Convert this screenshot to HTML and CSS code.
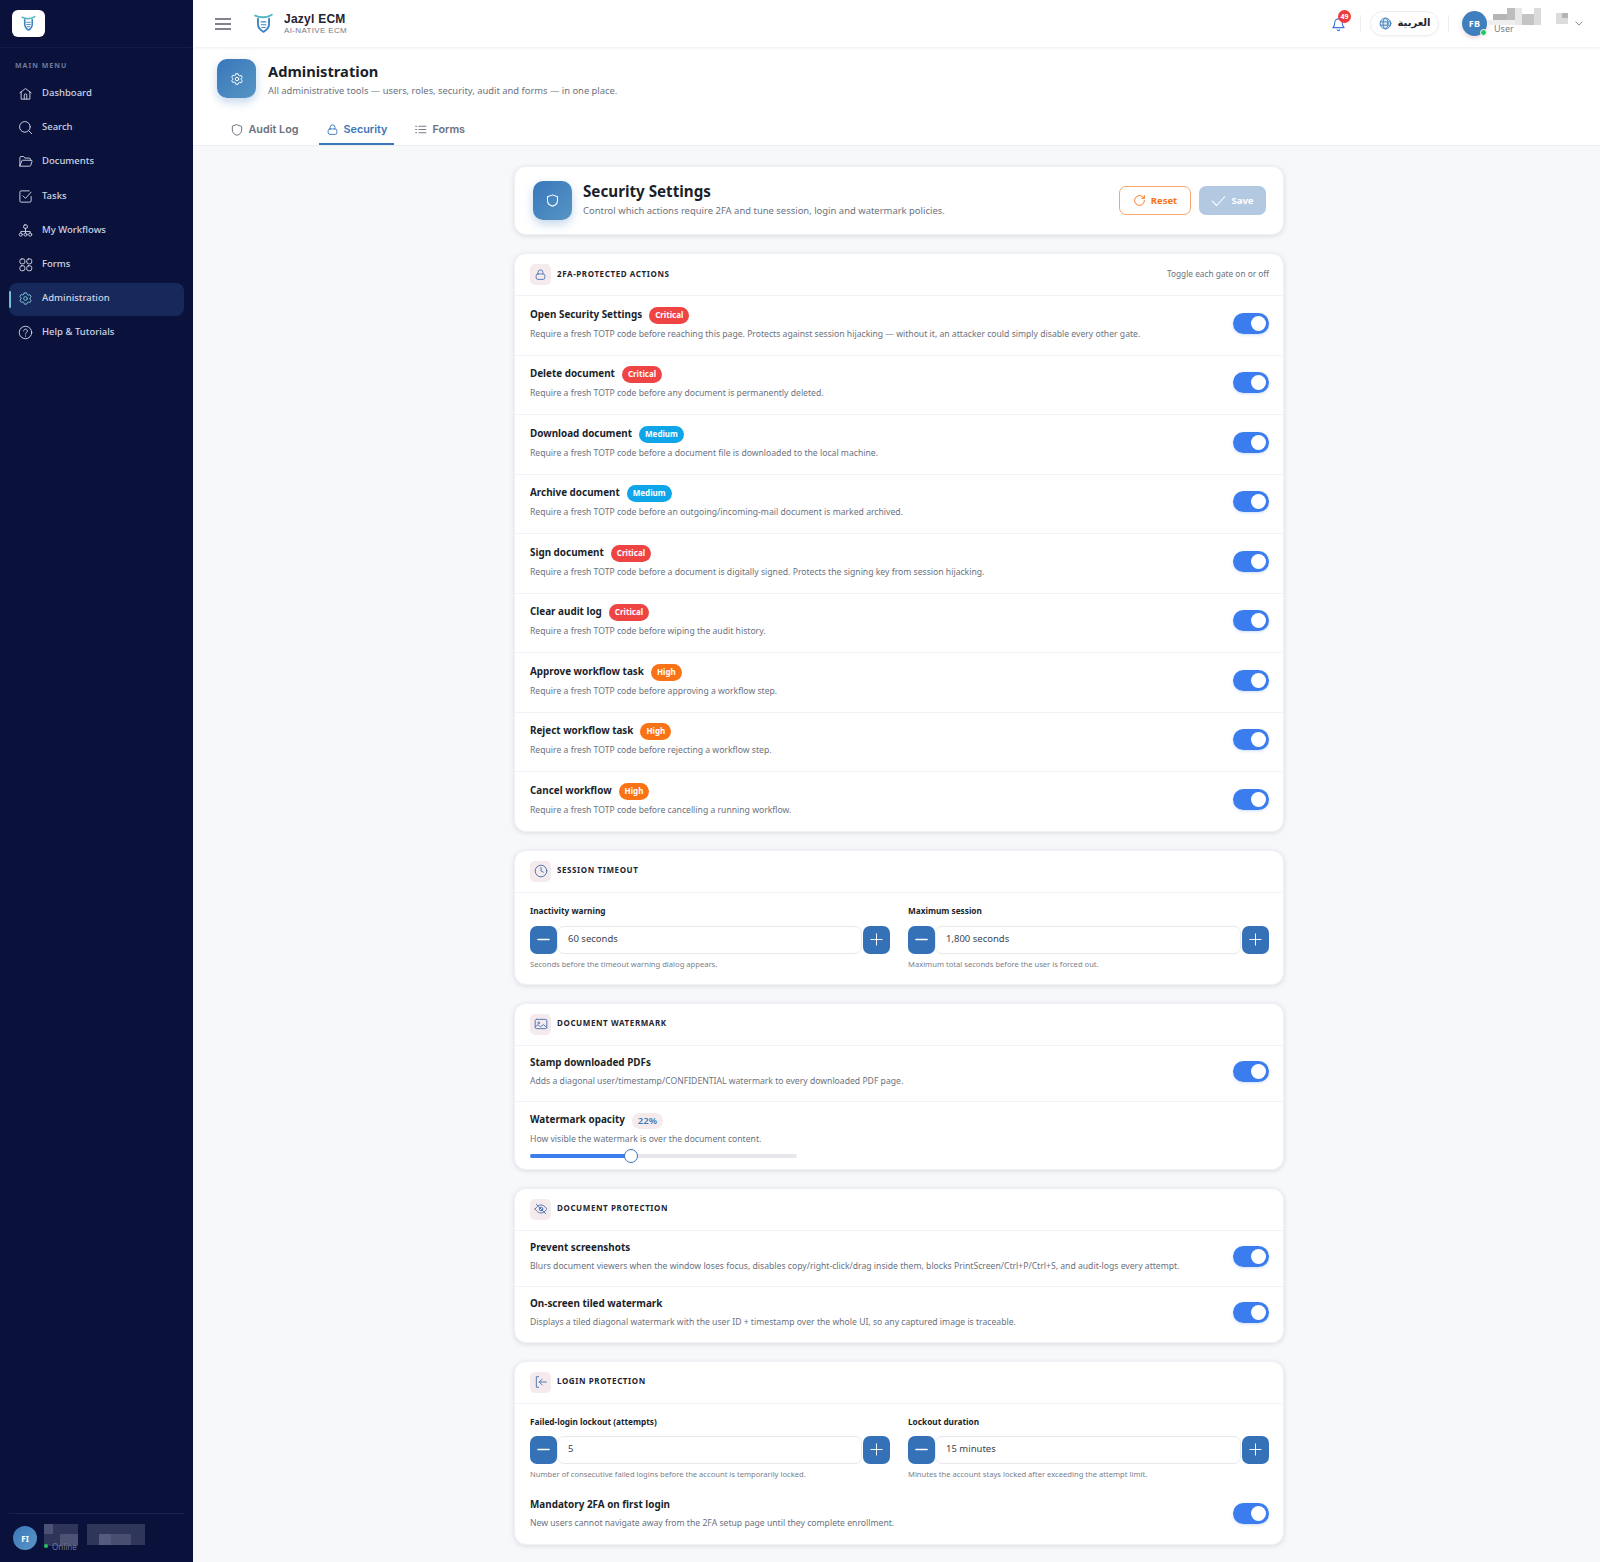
FILE: index.html
```html
<!DOCTYPE html>
<html lang="en">

<head>
  <meta charset="UTF-8">
  <meta name="viewport" content="width=device-width, initial-scale=1.0">
  <title>Security Settings</title>
  <link rel="stylesheet" href="styles.css">
</head>

<body>
  <svg class="defs" width="0" height="0">
    <symbol id="i-shield" viewBox="0 0 24 24"><path d="M12 3l8 3v6c0 4.600-3.300 7.800-8 9-4.700-1.200-8-4.400-8-9V6z"/></symbol>
    <symbol id="i-lock" viewBox="0 0 24 24"><rect x="4" y="11" width="16" height="10" rx="3"/><path d="M7.500 11V8a4.500 4.500 0 0 1 9 0v3"/></symbol>
    <symbol id="i-gear" viewBox="0 0 24 24"><circle cx="12" cy="12" r="3"/><path d="M10 3h4l.6 2.600 1.900 1.100 2.600-.8 2 3.400-2 1.800v2.200l2 1.800-2 3.400-2.600-.8-1.900 1.100L14 21h-4l-.6-2.600-1.900-1.100-2.600.8-2-3.400 2-1.800v-2.200l-2-1.800 2-3.400 2.600.8 1.900-1.100z"/></symbol>
    <symbol id="i-minus" viewBox="0 0 24 24"><path d="M3 12h18"/></symbol>
    <symbol id="i-plus" viewBox="0 0 24 24"><path d="M12 3v18M3 12h18"/></symbol>
  </svg>

  <div class="app">
    <aside class="sidebar">
      <div class="side-brand">
        <div class="brand-box">
          <svg viewBox="0 0 24 26" width="15" height="17" class="logo"><path d="M6 7v7c0 5 3 7.500 6 9.500 3-2 6-4.500 6-9.500V7" stroke="#3f86c4" stroke-width="2.600"/><path d="M9 11h6M9 14.500h6M10 18h4" stroke="#3f86c4" stroke-width="1.500"/><path d="M2 3c6 3 14 3 20-1" stroke="#55b6c6" stroke-width="2.600"/></svg>
        </div>
      </div>
      <div class="menu-label">MAIN MENU</div>
      <nav class="menu">
        <a class="menu-item"><svg viewBox="0 0 24 24"><path d="M3 11l9-7 9 7M5 9.500V21h14V9.500M10 21v-6.500a2 2 0 0 1 4 0V21"/></svg>Dashboard</a>
        <a class="menu-item"><svg viewBox="0 0 24 24"><circle cx="11" cy="11" r="8.500"/><path d="M17.500 17.500L22 22"/></svg>Search</a>
        <a class="menu-item"><svg viewBox="0 0 24 24"><path d="M3 19V6a2 2 0 0 1 2-2h4l2 2.500h7a2 2 0 0 1 2 2V10"/><path d="M3 19l3-8a1.500 1.500 0 0 1 1.400-1H21a1.500 1.500 0 0 1 1.400 2l-2 6a2 2 0 0 1-2 1.500H5a2 2 0 0 1-2-.5z"/></svg>Documents</a>
        <a class="menu-item"><svg viewBox="0 0 24 24"><path d="M21 12v7a2 2 0 0 1-2 2H5a2 2 0 0 1-2-2V5a2 2 0 0 1 2-2h13"/><path d="M8 11l4 4 9-10"/></svg>Tasks</a>
        <a class="menu-item"><svg viewBox="0 0 24 24"><rect x="9" y="3" width="6" height="5.500" rx="2"/><circle cx="4.500" cy="18.500" r="2.500"/><circle cx="12" cy="18.500" r="2.500"/><circle cx="19.500" cy="18.500" r="2.500"/><path d="M12 8.500V16M4.500 16v-2.500h15V16"/></svg>My Workflows</a>
        <a class="menu-item"><svg viewBox="0 0 24 24"><rect x="3" y="3" width="8" height="8" rx="3"/><rect x="14" y="3" width="8" height="8" rx="3"/><rect x="3" y="14" width="8" height="8" rx="3"/><rect x="14" y="14" width="8" height="8" rx="3"/></svg>Forms</a>
        <a class="menu-item active"><svg><use href="#i-gear"/></svg>Administration</a>
        <a class="menu-item"><svg viewBox="0 0 24 24"><circle cx="12" cy="12" r="10"/><path d="M9 9.500a3 3 0 1 1 4.500 2.600c-1 .6-1.500 1.200-1.500 2.400M12 17.500v.5"/></svg>Help &amp; Tutorials</a>
      </nav>
      <div class="side-user">
        <div class="side-avatar">FI</div>
        <div class="side-name">
          <svg class="pixels" width="101" height="22" viewBox="0 0 101 22"><rect width="34" height="22" fill="#363e62" opacity=".8"/><rect width="9" height="10" fill="#4c5274"/><rect x="16" y="10" width="18" height="11" fill="#4c5274"/><rect x="43" width="58" height="21" fill="#2e365a"/><rect x="55" y="10" width="12" height="11" fill="#555b7c"/><rect x="67" y="10" width="20" height="11" fill="#474e70"/></svg>
          <span class="online"><i></i>Online</span>
        </div>
      </div>
    </aside>

    <div class="main">
      <header class="topbar">
        <svg class="burger" viewBox="0 0 16 12" width="16" height="12"><path d="M0 1h16M0 6h16M0 11h16"/></svg>
        <svg viewBox="0 0 24 26" width="19" height="21" class="top-logo"><path d="M5 7v7c0 5 3.500 7.500 7 9.500 3.500-2 7-4.500 7-9.500V7" stroke="#3f86c4" stroke-width="2.400"/><path d="M9 11h6M9 14.500h6M10 18h4" stroke="#3f86c4" stroke-width="1.400"/><path d="M1.500 3c6 3 15 3 21-1" stroke="#55b6c6" stroke-width="2.400"/></svg>
        <div class="top-brand">
          <div class="top-name">Jazyl ECM</div>
          <div class="top-tag">AI-NATIVE ECM</div>
        </div>
        <div class="top-right">
          <div class="bell">
            <svg viewBox="0 0 24 24" width="15" height="15"><path d="M6 9a6 6 0 0 1 12 0c0 5 2 7 3 8H3c1-1 3-3 3-8zM10 20.500a2.200 2.200 0 0 0 4 0"/></svg>
            <span class="bell-badge">49</span>
          </div>
          <span class="top-sep"></span>
          <div class="lang">
            <svg viewBox="0 0 24 24" width="13" height="13"><circle cx="12" cy="12" r="10" fill="#dbe8f5"/><ellipse cx="12" cy="12" rx="4.500" ry="10"/><path d="M2.500 9h19M2.500 15h19"/></svg>
            <span>العربية</span>
          </div>
          <span class="top-sep"></span>
          <div class="avatar">FB<i></i></div>
          <div class="top-user">
            <svg class="pixels" width="54" height="17" viewBox="0 0 54 17"><rect x="6" y="6" width="14" height="6" fill="#b5b5b5"/><rect x="20" width="8" height="12" fill="#bdbdbd"/><rect x="28" width="7" height="17" fill="#e8e8e8"/><rect x="35" y="6" width="12" height="11" fill="#c4c4c4"/><rect x="47" width="7" height="17" fill="#dcdcdc"/><rect y="12" width="28" height="5" fill="#efefef"/></svg>
            <span>User</span>
          </div>
          <svg class="pixels top-px" width="12" height="11" viewBox="0 0 12 11"><rect width="12" height="11" fill="#dcdcdc"/><rect x="6" width="6" height="5" fill="#b5b5b5"/></svg>
          <svg class="chev" viewBox="0 0 10 6" width="8" height="5"><path d="M1 1l4 4 4-4"/></svg>
        </div>
      </header>

      <div class="page-head">
        <div class="head-row">
          <div class="grad-icon"><svg width="14" height="14"><use href="#i-gear"/></svg></div>
          <div>
            <h1>Administration</h1>
            <p>All administrative tools — users, roles, security, audit and forms — in one place.</p>
          </div>
        </div>
        <div class="tabs">
          <a class="tab"><svg width="14" height="14"><use href="#i-shield"/></svg>Audit Log</a>
          <a class="tab on"><svg width="13" height="13"><use href="#i-lock"/></svg>Security</a>
          <a class="tab"><svg viewBox="0 0 24 24" width="13" height="13"><path d="M9 6h13M9 12h13M9 18h13M3 6h2M3 12h2M3 18h2"/></svg>Forms</a>
        </div>
      </div>

      <main class="content">
        <div class="stack">
          <section class="card title-card">
            <div class="grad-icon"><svg width="15" height="15"><use href="#i-shield"/></svg></div>
            <div class="title-text">
              <h2>Security Settings</h2>
              <p>Control which actions require 2FA and tune session, login and watermark policies.</p>
            </div>
            <button class="btn reset"><svg viewBox="0 0 24 24" width="13" height="13"><path d="M21 12a9 9 0 1 1-9-9c2.500 0 4.900 1 6.700 2.700L21 8"/><path d="M21 3v5h-5"/></svg>Reset</button>
            <button class="btn save"><svg viewBox="0 0 24 24" width="15" height="15"><path d="M2 13l7 7L22 6"/></svg>Save</button>
          </section>

          <section class="card">
            <div class="card-head">
              <span class="head-icon"><svg width="13" height="13"><use href="#i-lock"/></svg></span>
              <h3>2FA-PROTECTED ACTIONS</h3>
              <span class="head-note">Toggle each gate on or off</span>
            </div>
            <div class="row">
              <div class="row-text">
                <div class="row-title">Open Security Settings <span class="badge red">Critical</span></div>
                <div class="row-desc">Require a fresh TOTP code before reaching this page. Protects against session hijacking — without it, an attacker could simply disable every other gate.</div>
              </div>
              <span class="toggle"></span>
            </div>
            <div class="row">
              <div class="row-text">
                <div class="row-title">Delete document <span class="badge red">Critical</span></div>
                <div class="row-desc">Require a fresh TOTP code before any document is permanently deleted.</div>
              </div>
              <span class="toggle"></span>
            </div>
            <div class="row">
              <div class="row-text">
                <div class="row-title">Download document <span class="badge blue">Medium</span></div>
                <div class="row-desc">Require a fresh TOTP code before a document file is downloaded to the local machine.</div>
              </div>
              <span class="toggle"></span>
            </div>
            <div class="row">
              <div class="row-text">
                <div class="row-title">Archive document <span class="badge blue">Medium</span></div>
                <div class="row-desc">Require a fresh TOTP code before an outgoing/incoming-mail document is marked archived.</div>
              </div>
              <span class="toggle"></span>
            </div>
            <div class="row">
              <div class="row-text">
                <div class="row-title">Sign document <span class="badge red">Critical</span></div>
                <div class="row-desc">Require a fresh TOTP code before a document is digitally signed. Protects the signing key from session hijacking.</div>
              </div>
              <span class="toggle"></span>
            </div>
            <div class="row">
              <div class="row-text">
                <div class="row-title">Clear audit log <span class="badge red">Critical</span></div>
                <div class="row-desc">Require a fresh TOTP code before wiping the audit history.</div>
              </div>
              <span class="toggle"></span>
            </div>
            <div class="row">
              <div class="row-text">
                <div class="row-title">Approve workflow task <span class="badge orange">High</span></div>
                <div class="row-desc">Require a fresh TOTP code before approving a workflow step.</div>
              </div>
              <span class="toggle"></span>
            </div>
            <div class="row">
              <div class="row-text">
                <div class="row-title">Reject workflow task <span class="badge orange">High</span></div>
                <div class="row-desc">Require a fresh TOTP code before rejecting a workflow step.</div>
              </div>
              <span class="toggle"></span>
            </div>
            <div class="row">
              <div class="row-text">
                <div class="row-title">Cancel workflow <span class="badge orange">High</span></div>
                <div class="row-desc">Require a fresh TOTP code before cancelling a running workflow.</div>
              </div>
              <span class="toggle"></span>
            </div>
          </section>

          <section class="card">
            <div class="card-head">
              <span class="head-icon"><svg viewBox="0 0 24 24" width="14" height="14"><circle cx="12" cy="12" r="10"/><path d="M12 6v6l4 2"/></svg></span>
              <h3>SESSION TIMEOUT</h3>
            </div>
            <div class="fields">
              <div class="field">
                <label>Inactivity warning</label>
                <div class="stepper">
                  <button class="minus"><svg width="15" height="15"><use href="#i-minus"/></svg></button>
                  <div class="step-value">60 seconds</div>
                  <button><svg width="15" height="15"><use href="#i-plus"/></svg></button>
                </div>
                <div class="hint">Seconds before the timeout warning dialog appears.</div>
              </div>
              <div class="field">
                <label>Maximum session</label>
                <div class="stepper">
                  <button class="minus"><svg width="15" height="15"><use href="#i-minus"/></svg></button>
                  <div class="step-value">1,800 seconds</div>
                  <button><svg width="15" height="15"><use href="#i-plus"/></svg></button>
                </div>
                <div class="hint">Maximum total seconds before the user is forced out.</div>
              </div>
            </div>
          </section>

          <section class="card">
            <div class="card-head">
              <span class="head-icon"><svg viewBox="0 0 24 24" width="14" height="14"><rect x="2" y="4" width="20" height="16" rx="2.500"/><circle cx="8" cy="10" r="1.500"/><path d="M2 17l5-4 4 4 5-4 6 5"/></svg></span>
              <h3>DOCUMENT WATERMARK</h3>
            </div>
            <div class="row plain">
              <div class="row-text">
                <div class="row-title">Stamp downloaded PDFs</div>
                <div class="row-desc">Adds a diagonal user/timestamp/CONFIDENTIAL watermark to every downloaded PDF page.</div>
              </div>
              <span class="toggle"></span>
            </div>
            <div class="row plain opacity-row">
              <div class="row-text">
                <div class="row-title">Watermark opacity <span class="pct">22%</span></div>
                <div class="row-desc">How visible the watermark is over the document content.</div>
                <div class="slider"><span class="slider-fill" style="width: 37.500%"></span><span class="slider-knob"></span></div>
              </div>
            </div>
          </section>

          <section class="card">
            <div class="card-head">
              <span class="head-icon"><svg viewBox="0 0 24 24" width="14" height="14"><path d="M2 12s4-7 10-7 10 7 10 7-4 7-10 7-10-7-10-7z"/><circle cx="12" cy="12" r="3"/><path d="M4 4l16 16"/></svg></span>
              <h3>DOCUMENT PROTECTION</h3>
            </div>
            <div class="row plain">
              <div class="row-text">
                <div class="row-title">Prevent screenshots</div>
                <div class="row-desc">Blurs document viewers when the window loses focus, disables copy/right-click/drag inside them, blocks PrintScreen/Ctrl+P/Ctrl+S, and audit-logs every attempt.</div>
              </div>
              <span class="toggle"></span>
            </div>
            <div class="row plain">
              <div class="row-text">
                <div class="row-title">On-screen tiled watermark</div>
                <div class="row-desc">Displays a tiled diagonal watermark with the user ID + timestamp over the whole UI, so any captured image is traceable.</div>
              </div>
              <span class="toggle"></span>
            </div>
          </section>

          <section class="card">
            <div class="card-head">
              <span class="head-icon"><svg viewBox="0 0 24 24" width="14" height="14"><path d="M8 3H4v18h4M21 12H9M14 7l-5 5 5 5"/></svg></span>
              <h3>LOGIN PROTECTION</h3>
            </div>
            <div class="fields compact">
              <div class="field">
                <label>Failed-login lockout (attempts)</label>
                <div class="stepper">
                  <button class="minus"><svg width="15" height="15"><use href="#i-minus"/></svg></button>
                  <div class="step-value">5</div>
                  <button><svg width="15" height="15"><use href="#i-plus"/></svg></button>
                </div>
                <div class="hint">Number of consecutive failed logins before the account is temporarily locked.</div>
              </div>
              <div class="field">
                <label>Lockout duration</label>
                <div class="stepper">
                  <button class="minus"><svg width="15" height="15"><use href="#i-minus"/></svg></button>
                  <div class="step-value">15 minutes</div>
                  <button><svg width="15" height="15"><use href="#i-plus"/></svg></button>
                </div>
                <div class="hint">Minutes the account stays locked after exceeding the attempt limit.</div>
              </div>
            </div>
            <div class="row plain last">
              <div class="row-text">
                <div class="row-title">Mandatory 2FA on first login</div>
                <div class="row-desc">New users cannot navigate away from the 2FA setup page until they complete enrollment.</div>
              </div>
              <span class="toggle"></span>
            </div>
          </section>
        </div>
      </main>
    </div>
  </div>
</body>

</html>
```

FILE: styles.css
```css
* {
  margin: 0;
  padding: 0;
  box-sizing: border-box;
}

html,
body {
  height: 100%;
  overflow: hidden;
}

body {
  font-family: "Noto Sans", "DejaVu Sans", sans-serif;
  background: #f7f8fa;
  color: #1a1f2b;
}

.defs {
  position: absolute;
}

svg {
  fill: none;
  stroke: currentColor;
  stroke-width: 1.7;
  stroke-linecap: round;
  stroke-linejoin: round;
  flex-shrink: 0;
}

svg.pixels {
  stroke: none;
  display: block;
}

.app {
  display: flex;
  height: 1562px;
}

/* sidebar */
.sidebar {
  width: 193px;
  background: #0a123c;
  display: flex;
  flex-direction: column;
  flex-shrink: 0;
  color: #cdd5e4;
}

.side-brand {
  height: 48px;
  padding: 10px 12px;
  border-bottom: 1px solid #101b4a;
}

.brand-box {
  width: 33px;
  height: 27px;
  background: #fff;
  border-radius: 6px;
  display: flex;
  align-items: center;
  justify-content: center;
}

.menu-label {
  font-size: 7px;
  font-weight: 700;
  letter-spacing: 1px;
  color: #6f7896;
  margin: 13px 0 0 15px;
  line-height: 10px;
}

.menu {
  margin-top: 6.500px;
  padding: 0 9px;
  display: flex;
  flex-direction: column;
  gap: 1.200px;
}

.menu-item {
  display: flex;
  align-items: center;
  gap: 9px;
  height: 33px;
  padding: 0 0 3px 9px;
  font-size: 9.500px;
  font-weight: 500;
  border-radius: 8px;
  position: relative;
}

.menu-item svg {
  width: 15px;
  height: 15px;
  stroke-width: 1.500;
  margin-top: 2px;
}

.menu-item.active {
  background: #16295a;
}

.menu-item.active svg {
  color: #7cc3d8;
}

.menu-item.active::before {
  content: "";
  position: absolute;
  left: 0;
  top: 8px;
  bottom: 8px;
  width: 2px;
  border-radius: 2px;
  background: #6fc0d6;
}

.side-user {
  margin: auto 9px 0;
  height: 49px;
  border-top: 1px solid #152250;
  display: flex;
  align-items: center;
  gap: 7px;
  padding: 0 0 0 4px;
}

.side-avatar {
  width: 24px;
  height: 24px;
  border-radius: 50%;
  background: linear-gradient(135deg, #3b78bb, #5a96c4);
  color: #fff;
  font-size: 8px;
  font-weight: 700;
  display: flex;
  align-items: center;
  justify-content: center;
}

.side-name {
  position: relative;
  height: 26px;
  margin-top: -3px;
}

.online {
  position: absolute;
  left: 0;
  top: 17px;
  display: flex;
  align-items: center;
  gap: 4px;
  font-size: 8px;
  color: #6f7896;
}

.online i {
  width: 4px;
  height: 4px;
  border-radius: 50%;
  background: #22c55e;
}

/* top */
.main {
  flex: 1;
  min-width: 0;
  display: flex;
  flex-direction: column;
}

.topbar {
  height: 47px;
  background: #fff;
  box-shadow: 0 1px 3px rgba(20, 30, 60, .08);
  display: flex;
  align-items: center;
  padding: 0 17px 0 22px;
  position: relative;
}

.burger {
  color: #555b66;
  stroke-width: 1.300;
}

.top-logo {
  margin-left: 23px;
}

.top-brand {
  margin-left: 11px;
}

.top-name {
  font-family: "Liberation Sans", sans-serif;
  font-size: 12px;
  font-weight: 700;
  letter-spacing: .25px;
  line-height: 13px;
  color: #1f2430;
}

.top-tag {
  font-family: "Liberation Sans", sans-serif;
  font-size: 8px;
  letter-spacing: .35px;
  line-height: 9px;
  color: #777d89;
}

.top-right {
  margin-left: auto;
  display: flex;
  align-items: center;
}

.bell {
  position: relative;
  color: #3b74d9;
  display: flex;
  margin: 1px -2px 0 2px;
}

.bell-badge {
  position: absolute;
  left: 7px;
  top: -7px;
  width: 13px;
  height: 13px;
  border-radius: 50%;
  background: #ef3b3b;
  color: #fff;
  font-size: 7px;
  font-weight: 700;
  display: flex;
  align-items: center;
  justify-content: center;
}

.top-sep {
  width: 1px;
  height: 17px;
  background: #eceef1;
  margin: 0 9px 0 16px;
}

.lang {
  width: 69px;
  height: 25px;
  border: 1px solid #eceef1;
  border-radius: 13px;
  display: flex;
  align-items: center;
  justify-content: center;
  gap: 6px;
  color: #3f7fbd;
  box-shadow: 0 1px 2px rgba(20, 30, 60, .05);
}

.lang span {
  font-size: 10px;
  font-weight: 700;
  color: #1f2430;
  margin-top: -3px;
}

.lang + .top-sep {
  margin: 0 13px 0 9px;
}

.avatar {
  width: 25px;
  height: 25px;
  border-radius: 50%;
  background: #3f7fbd;
  color: #fff;
  font-size: 9px;
  font-weight: 700;
  letter-spacing: .3px;
  display: flex;
  align-items: center;
  justify-content: center;
  position: relative;
  box-shadow: 0 2px 5px rgba(200, 120, 120, .3);
}

.avatar i {
  position: absolute;
  right: 0;
  bottom: 0;
  width: 7px;
  height: 7px;
  border-radius: 50%;
  background: #22c55e;
  border: 1.500px solid #fff;
}

.top-user {
  width: 54px;
  height: 28px;
  position: relative;
  margin-bottom: 4px;
  font-size: 9px;
  line-height: 11px;
  color: #7a808c;
}

.top-user span {
  position: absolute;
  left: 7px;
  top: 15.500px;
}

.top-px {
  margin: -10px 0 0 15px;
}

.chev {
  margin-left: 7px;
  color: #666c78;
  stroke-width: 1;
}

/* page heading */
.page-head {
  background: #fff;
  height: 99px;
  border-bottom: 1px solid #eceef1;
  padding: 12px 24px 0;
  display: flex;
  flex-direction: column;
}

.head-row {
  display: flex;
  gap: 12px;
}

.grad-icon {
  width: 39px;
  height: 39px;
  border-radius: 10px;
  background: linear-gradient(135deg, #3877bb, #5795c4);
  color: #fff;
  display: flex;
  align-items: center;
  justify-content: center;
  box-shadow: 0 4px 10px rgba(60, 120, 190, .3);
  flex-shrink: 0;
}

h1 {
  font-size: 14.700px;
  line-height: 22px;
  font-weight: 700;
  margin-top: 1px;
}

.head-row p {
  font-size: 9.400px;
  line-height: 16px;
  color: #6b7280;
  margin-top: 1px;
}

.tabs {
  display: flex;
  margin-top: 13px;
  margin-left: 6px;
}

.tab {
  display: flex;
  align-items: center;
  gap: 5px;
  height: 33px;
  padding: 4px 6.500px 0;
  margin-right: 14px;
  font-family: "Inter", sans-serif;
  font-size: 10.800px;
  font-weight: 600;
  color: #6b7280;
  border-bottom: 2px solid transparent;
}

.tab.on {
  color: #3a76b8;
  border-bottom-color: #3a76b8;
}

/* body */
.content {
  flex: 1;
  display: flex;
  justify-content: center;
  padding: 20px 0 0 5px;
}

.stack {
  width: 770px;
  display: flex;
  flex-direction: column;
  gap: 18px;
}

.card {
  background: #fff;
  border-radius: 12px;
  border: 1px solid #eff1f4;
  box-shadow: 0 1px 5px rgba(20, 30, 60, .13);
  overflow: hidden;
  flex-shrink: 0;
}

.title-card {
  height: 69px;
  display: flex;
  align-items: center;
  padding: 0 17px 0 18px;
  gap: 11px;
}

.title-text {
  flex: 1;
  margin-top: -3px;
}

h2 {
  font-size: 15.200px;
  line-height: 22px;
  font-weight: 700;
}

.title-text p {
  font-size: 9.450px;
  line-height: 16px;
  color: #6b7280;
  margin-top: 1px;
}

.btn {
  height: 29px;
  border-radius: 7px;
  font-family: inherit;
  font-size: 9.500px;
  font-weight: 700;
  display: flex;
  align-items: center;
  justify-content: center;
  gap: 5px;
}

.reset {
  width: 72px;
  border: 1px solid #f7a56b;
  background: #fff;
  color: #f97316;
}

.save {
  width: 67px;
  margin-left: -3px;
  border: 0;
  background: #b3c9e1;
  color: #fff;
}

.card-head {
  height: 41px;
  display: flex;
  align-items: center;
  padding: 0 14px 0 15px;
  gap: 6px;
}

.head-icon {
  width: 21px;
  height: 21px;
  border-radius: 5px;
  background: #f6ebec;
  color: #4f78b8;
  display: flex;
  align-items: center;
  justify-content: center;
}

h3 {
  font-size: 8px;
  font-weight: 700;
  letter-spacing: .6px;
  margin-top: -3px;
  color: #1f2430;
}

.head-note {
  margin: -3px 0 0 auto;
  font-size: 8.300px;
  color: #6b7280;
}

.row {
  height: 59.500px;
  border-top: 1px solid #f1f2f5;
  padding: 0 14px 4px 15px;
  display: flex;
  align-items: center;
  justify-content: space-between;
}

.row-title {
  font-size: 9.900px;
  font-weight: 700;
  line-height: 17px;
  display: flex;
  align-items: center;
  gap: 7px;
  white-space: nowrap;
}

.row-desc {
  font-size: 8.650px;
  line-height: 15px;
  color: #6b7280;
  margin-top: 3px;
  white-space: nowrap;
}

.badge {
  height: 17px;
  border-radius: 9px;
  padding: 0 6px;
  color: #fff;
  font-size: 8px;
  font-weight: 700;
  line-height: 15px;
  margin-top: 2px;
}

.red {
  background: #ef4444;
}

.blue {
  background: #0ea5e9;
}

.orange {
  background: #f97316;
}

.toggle {
  width: 36px;
  height: 21px;
  border-radius: 11px;
  background: #3b7cee;
  position: relative;
  flex-shrink: 0;
  box-shadow: 0 1px 3px rgba(59, 124, 238, .25);
}

.toggle::after {
  content: "";
  position: absolute;
  right: 3px;
  top: 3px;
  width: 15px;
  height: 15px;
  border-radius: 50%;
  background: #fff;
}

.row.plain {
  height: 56px;
  padding-bottom: 4px;
}

.row.last {
  border-top: 0;
}

.row.opacity-row {
  align-items: flex-start;
  padding-top: 9px;
  height: 68px;
}

.pct {
  height: 16px;
  border-radius: 8px;
  padding: 0 6px;
  background: #f6ebec;
  color: #3f78bb;
  font-size: 9.500px;
  font-weight: 600;
  line-height: 16px;
  margin-top: 2px;
}

.slider {
  position: relative;
  width: 267px;
  height: 4px;
  margin-top: 7px;
  background: #e5e7eb;
  border-radius: 2px;
}

.slider-fill {
  display: block;
  height: 100%;
  background: #3b7cee;
  border-radius: 2px;
}

.slider-knob {
  position: absolute;
  left: 94px;
  top: -5px;
  width: 14px;
  height: 14px;
  border-radius: 50%;
  background: #fff;
  border: 1.500px solid #3a76b8;
}

.fields {
  border-top: 1px solid #f1f2f5;
  display: grid;
  grid-template-columns: 360px 361px;
  gap: 18px;
  padding: 12px 13px 14px 15px;
}

.fields.compact {
  padding-bottom: 8px;
}

label {
  display: block;
  font-size: 8.250px;
  font-weight: 700;
  line-height: 12px;
}

.stepper {
  display: flex;
  margin-top: 9px;
  gap: 1px;
}

.compact .stepper {
  margin-top: 8px;
}

.stepper button {
  width: 27px;
  height: 28px;
  border: 0;
  border-radius: 7px;
  background: #3471b6;
  color: #fff;
  display: flex;
  align-items: center;
  justify-content: center;
  flex-shrink: 0;
}

.stepper button svg {
  stroke-width: 1.500;
}

.stepper .minus svg {
  stroke-width: 2.200;
}

.step-value {
  flex: 1;
  height: 28px;
  border: 1px solid #e9e9ec;
  border-radius: 7px;
  padding-left: 10px;
  margin-left: -1px;
  font-size: 9.500px;
  line-height: 23px;
  color: #3d4350;
}

.hint {
  font-size: 7.600px;
  line-height: 12px;
  color: #7a808c;
  margin-top: 4px;
}
```
